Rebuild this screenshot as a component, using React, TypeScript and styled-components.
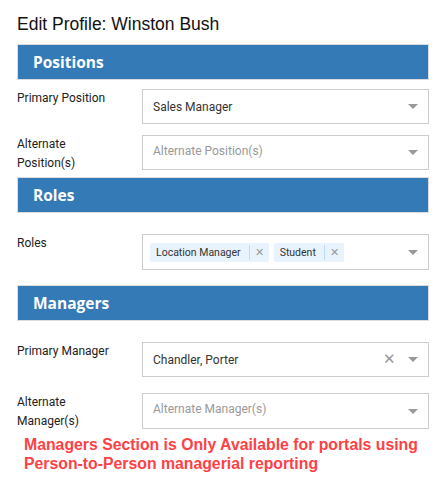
import React from "react";
import styled, { createGlobalStyle } from "styled-components";

const Global = createGlobalStyle`
  html, body { margin: 0; padding: 0; background: #fff; }
  body { font-family: Roboto, "Liberation Sans", Arial, sans-serif; }
`;

const Page = styled.div`
  width: 412px;
  padding: 0 0 0 17px;
`;

const Title = styled.h1`
  margin: 0;
  height: 44px;
  padding-top: 12px;
  box-sizing: border-box;
  font-family: "Liberation Sans", Arial, sans-serif;
  font-weight: 400;
  font-size: 17.5px;
  line-height: 24px;
  color: #111;
`;

const SectionBar = styled.div<{ $mt?: number }>`
  margin-top: ${(p) => p.$mt ?? 0}px;
  height: 36px;
  box-sizing: border-box;
  background: #337ab7;
  border: 1px solid #dcdcdc;
  display: flex;
  align-items: center;
  padding-left: 15px;
  font-family: "Open Sans", sans-serif;
  font-weight: 700;
  font-size: 15.5px;
  color: #fff;
`;

const Row = styled.div<{ $mt: number }>`
  margin-top: ${(p) => p.$mt}px;
  display: grid;
  grid-template-columns: 125px 287px;
  align-items: start;
`;

const Label = styled.div`
  height: 0;
  overflow: visible;
  font-size: 12px;
  line-height: 19px;
  color: #222;
`;

const Select = styled.div<{ $h?: number }>`
  height: ${(p) => p.$h ?? 35}px;
  box-sizing: border-box;
  border: 1px solid #ccc;
  display: flex;
  align-items: center;
  padding: 0 10px 0 10px;
  font-size: 12px;
  color: #333;
`;

const Value = styled.div<{ $placeholder?: boolean; $shift?: number }>`
  flex: 1;
  color: ${(p) => (p.$placeholder ? "#999" : "#333")};
  position: relative;
  top: ${(p) => p.$shift ?? 0}px;
`;

const Tags = styled.div`
  flex: 1;
  display: flex;
  gap: 5px;
  margin-left: -3px;
`;

const Tag = styled.div`
  display: flex;
  align-items: center;
  height: 19px;
  background: #e8f3fe;
  border-radius: 2px;
  padding: 0 5px 0 6px;
  color: #333;
  font-size: 10.5px;
`;

const TagSep = styled.span`
  width: 1px;
  height: 15px;
  background: #bcdcf7;
  margin: 0 5px 0 8px;
`;

const Clear = styled.span`
  color: #999;
  font-size: 15px;
  line-height: 1;
  margin-right: 12px;
`;

const TagClear = styled.span`
  color: #999;
  font-size: 11px;
  line-height: 1;
`;

const Arrow = styled.span`
  width: 0;
  height: 0;
  border-left: 5px solid transparent;
  border-right: 5px solid transparent;
  border-top: 5px solid #999;
`;

const Notice = styled.div`
  margin-top: 6px;
  padding-left: 7px;
  font-family: "Liberation Sans", Arial, sans-serif;
  font-weight: 700;
  font-size: 15.8px;
  line-height: 19px;
  color: #ff4146;
`;

export default function App() {
  return (
    <>
      <Global />
      <Page>
        <Title>Edit Profile: Winston Bush</Title>
        <SectionBar>Positions</SectionBar>
        <Row $mt={9}>
          <Label>Primary Position</Label>
          <Select>
            <Value>Sales Manager</Value>
            <Arrow />
          </Select>
        </Row>
        <Row $mt={11}>
          <Label>
            Alternate
            <br />
            Position(s)
          </Label>
          <Select>
            <Value $placeholder $shift={-2}>Alternate Position(s)</Value>
            <Arrow />
          </Select>
        </Row>
        <SectionBar $mt={7}>Roles</SectionBar>
        <Row $mt={21}>
          <Label>Roles</Label>
          <Select $h={36}>
            <Tags>
              <Tag>
                Location Manager
                <TagSep />
                <TagClear>✕</TagClear>
              </Tag>
              <Tag>
                Student
                <TagSep />
                <TagClear>✕</TagClear>
              </Tag>
            </Tags>
            <Arrow />
          </Select>
        </Row>
        <SectionBar $mt={15}>Managers</SectionBar>
        <Row $mt={21}>
          <Label>Primary Manager</Label>
          <Select>
            <Value>Chandler, Porter</Value>
            <Clear>✕</Clear>
            <Arrow />
          </Select>
        </Row>
        <Row $mt={16}>
          <Label>
            Alternate
            <br />
            Manager(s)
          </Label>
          <Select $h={36}>
            <Value $placeholder $shift={-2}>Alternate Manager(s)</Value>
            <Arrow />
          </Select>
        </Row>
        <Notice>
          Managers Section is Only Available for portals using
          <br />
          Person-to-Person managerial reporting
        </Notice>
      </Page>
    </>
  );
}
